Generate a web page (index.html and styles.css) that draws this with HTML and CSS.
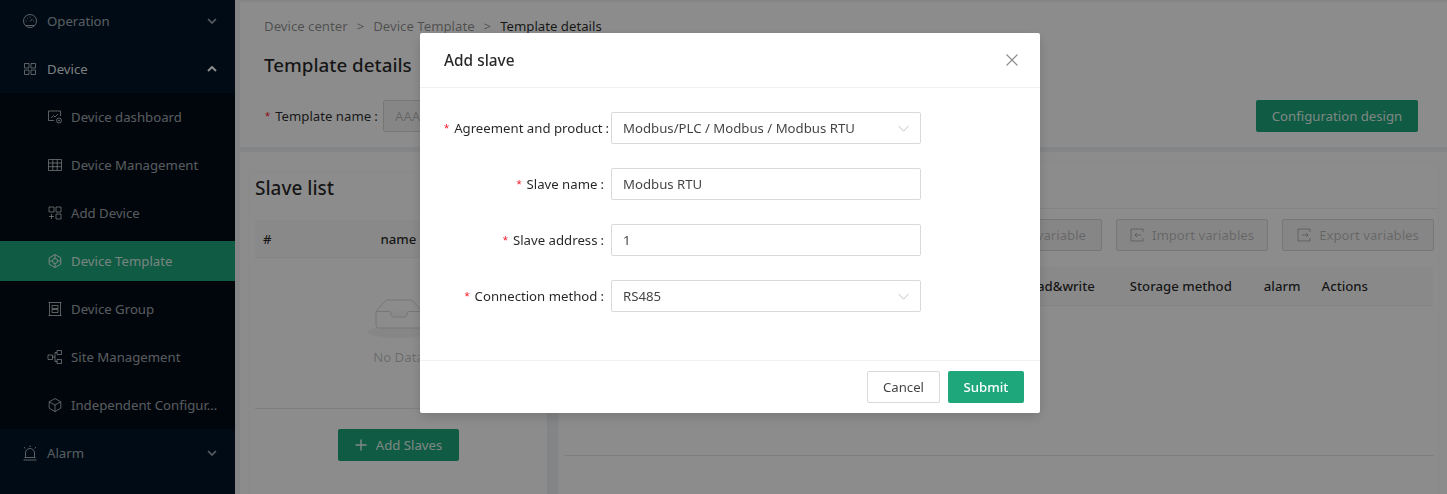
FILE: index.html
```html
<!DOCTYPE html>
<html lang="en">
<head>
<meta charset="utf-8">
<title>Template details</title>
<link rel="stylesheet" href="styles.css">
</head>
<body>
<div class="app">
  <aside class="sider">
    <div class="menu-title">
      <svg class="ico" viewBox="0 0 16 16"><circle cx="8" cy="8" r="6.5"/><path d="M8 8.5l2.6-2.8M3.8 8h1M11.2 8h1M5 5l.7.7M8 3.600v1M4 12.500h8"/></svg>
      <span class="menu-text">Operation</span>
      <svg class="arrow" viewBox="0 0 10 6"><path d="M1 1l4 4 4-4"/></svg>
    </div>
    <div class="menu-title open">
      <svg class="ico" viewBox="0 0 16 16"><path d="M2.500 2.500h4.500v4.500H2.500zM9 2.500h4.500v4.500H9zM2.500 9h4.500v4.500H2.500zM9 9h4.500v4.500H9z"/></svg>
      <span class="menu-text bright">Device</span>
      <svg class="arrow up" viewBox="0 0 10 6"><path d="M1 5l4-4 4 4"/></svg>
    </div>
    <ul class="submenu">
      <li class="sub-item"><svg class="ico" viewBox="0 0 16 16"><path d="M7 11.500H1.500V2h12v5M4 9l2.500-2.500 1.500 1.500 3-3"/><circle cx="12" cy="11.500" r="2.500"/><circle cx="12" cy="11.500" r=".6"/></svg><span>Device dashboard</span></li>
      <li class="sub-item"><svg class="ico" viewBox="0 0 16 16"><path d="M1.500 2.500h13v11h-13zM1.500 6h13M1.500 9.700h13M5.800 2.500v11M10.200 2.500v11"/></svg><span>Device Management</span></li>
      <li class="sub-item"><svg class="ico" viewBox="0 0 16 16"><path d="M2 2h5v5H2zM9 2h5v5H9zM9 9h5v5H9zM4.500 9v5M2 11.500h5"/></svg><span>Add Device</span></li>
      <li class="sub-item selected"><svg class="ico" viewBox="0 0 16 16"><path d="M8 1.500l5.800 3.300v6.400L8 14.500l-5.800-3.300V4.800z"/><circle cx="8" cy="8" r="2.500"/><path d="M2.200 8h3.300M10.500 8h3.300M8 1.500v4M8 10.500v4"/></svg><span>Device Template</span></li>
      <li class="sub-item"><svg class="ico" viewBox="0 0 16 16"><path d="M1.500 1.500h13M1.500 14.500h13M2.500 1.500v13M13.500 1.500v13M5 4.500h6v3H5zM5 8.500h6v3H5z"/></svg><span>Device Group</span></li>
      <li class="sub-item"><svg class="ico" viewBox="0 0 16 16"><path d="M1 6h4.500v4.500H1zM10 1.500h4.500v4H10zM10 10.500h4.500v4H10zM5.500 8h2.500M8 3.500v9M8 3.500h2M8 12.500h2"/></svg><span>Site Management</span></li>
      <li class="sub-item"><svg class="ico" viewBox="0 0 16 16"><path d="M8 1.500l5.800 3.300v6.400L8 14.500l-5.800-3.300V4.800zM2.200 4.800L8 8l5.800-3.200M8 8v6.500"/></svg><span>Independent Configur...</span></li>
    </ul>
    <div class="menu-title">
      <svg class="ico" viewBox="0 0 16 16"><path d="M3.500 12.500V8a4.500 4.500 0 0 1 9 0v4.500M1.500 15h13M2.500 12.500h11M8 .5v1.500M2 2l1.200 1.500M14 2l-1.200 1.500"/></svg>
      <span class="menu-text">Alarm</span>
      <svg class="arrow" viewBox="0 0 10 6"><path d="M1 1l4 4 4-4"/></svg>
    </div>
  </aside>

  <main class="content">
    <section class="top-card">
      <nav class="crumbs">
        <span>Device center</span><span class="sep">&gt;</span><span>Device Template</span><span class="sep">&gt;</span><span class="crumb-now">Template details</span>
      </nav>
      <h1 class="page-title">Template details</h1>
      <div class="template-row">
        <label class="tpl-label"><span class="req">*</span>Template name<span class="colon">:</span></label>
        <div class="tpl-input">AAA</div>
        <button class="btn primary config-btn">Configuration design</button>
      </div>
    </section>

    <section class="work">
      <div class="slave-card">
        <div class="slave-panel">
          <h2 class="panel-title">Slave list</h2>
          <div class="slave-head"><span>#</span><span class="name-col">name</span></div>
          <div class="empty">
            <svg class="empty-ico" width="64" height="41" viewBox="0 0 64 41"><ellipse cx="32" cy="34" rx="32" ry="6" fill="#f5f5f5"/><path d="M55 13.300L44.900 2H19.100L9 13.300V27a3 3 0 0 0 3 3h40a3 3 0 0 0 3-3z" fill="#fff" stroke="#d9d9d9"/><path d="M9 13.500h13c1.500 0 2 1 2 2.500s1 3 3 3h10c2 0 3-1.500 3-3s.5-2.500 2-2.500h13" fill="#fafafa" stroke="#d9d9d9"/></svg>
            <span class="empty-text">No Data</span>
          </div>
          <div class="slave-foot">
            <button class="btn primary add-btn"><svg class="plus" viewBox="0 0 12 12"><path d="M6 .5v11M.5 6h11"/></svg>Add Slaves</button>
          </div>
        </div>
      </div>

      <div class="var-card">
        <div class="var-panel">
          <div class="var-tabs"></div>
          <div class="var-tools">
            <button class="btn ghost add-var">Add variable</button>
            <button class="btn ghost tool"><svg class="tool-ico" viewBox="0 0 14 14"><path d="M13 4V1H1v12h12v-3M11 7H5M7 5L5 7l2 2"/></svg>Import variables</button>
            <button class="btn ghost tool"><svg class="tool-ico" viewBox="0 0 14 14"><path d="M13 4V1H1v12h12v-3M5 7h6M9 5l2 2-2 2"/></svg>Export variables</button>
          </div>
          <div class="var-head">
            <span class="c-rw">read&amp;write</span>
            <span class="c-store">Storage method</span>
            <span class="c-alarm">alarm</span>
            <span class="c-act">Actions</span>
          </div>
          <div class="var-body"></div>
        </div>
      </div>
    </section>
  </main>
</div>

<div class="mask">
  <div class="modal">
    <header class="modal-head">
      <span class="modal-title">Add slave</span>
      <svg class="close" viewBox="0 0 12 12"><path d="M.5.500l11 11M11.500.500l-11 11"/></svg>
    </header>
    <form class="modal-body">
      <div class="field"><label class="field-label wide"><span class="req">*</span>Agreement and product<span class="colon">:</span></label><div class="control">Modbus/PLC / Modbus / Modbus RTU<svg class="chev" viewBox="0 0 12 7"><path d="M.5.500L6 6.500 11.500.500"/></svg></div></div>
      <div class="field"><label class="field-label"><span class="req">*</span>Slave name<span class="colon">:</span></label><div class="control">Modbus RTU</div></div>
      <div class="field"><label class="field-label"><span class="req">*</span>Slave address<span class="colon">:</span></label><div class="control">1</div></div>
      <div class="field"><label class="field-label"><span class="req">*</span>Connection method<span class="colon">:</span></label><div class="control">RS485<svg class="chev" viewBox="0 0 12 7"><path d="M.5.500L6 6.500 11.500.500"/></svg></div></div>
    </form>
    <footer class="modal-foot">
      <button class="btn cancel">Cancel</button>
      <button class="btn submit">Submit</button>
    </footer>
  </div>
</div>
</body>
</html>
```
FILE: styles.css
```css
* { box-sizing: border-box; }
html, body { margin: 0; height: 494px; overflow: hidden; }
body { font-family: "Noto Sans", "Open Sans", sans-serif; font-size: 13.2px; color: rgba(0,0,0,.85); background: #f0f2f5; }
ul { list-style: none; margin: 0; padding: 0; }
h1, h2 { margin: 0; font-weight: 500; }
svg { fill: none; stroke: currentColor; flex: none; }

.app { display: flex; height: 494px; }

/* sidebar */
.sider { width: 235px; flex: none; background: #001529; color: rgba(255,255,255,.65); padding-top: 1px; }
.menu-title { display: flex; align-items: center; height: 40px; padding: 0 18px 0 22px; margin-bottom: 8px; }
.menu-title.open { margin-bottom: 4px; }
.menu-text { margin-left: 9px; flex: 1; padding-bottom: 1px; }
.menu-text.bright { color: rgba(255,255,255,.9); }
.ico { width: 16px; height: 16px; stroke-width: 1; }
.arrow { width: 10px; height: 6px; stroke-width: 1.6; }
.arrow.up { stroke: #fff; stroke-width: 2; }
.submenu { background: #000c17; padding: 4px 0; margin-bottom: 4px; }
.sub-item { display: flex; align-items: center; gap: 8px; height: 40px; padding-left: 47px; margin-bottom: 8px; white-space: nowrap; padding-bottom: 1px; }
.sub-item:last-child { margin-bottom: 0; }
.sub-item.selected { background: #1da77a; color: rgba(255,255,255,.85); }

/* main */
.content { flex: 1; min-width: 0; padding: 2px 0 0 5px; display: flex; flex-direction: column; gap: 5px; }
.top-card { height: 145px; background: #fff; padding: 15px 29px 0 24px; flex: none; }
.crumbs { display: flex; gap: 9px; color: rgba(0,0,0,.45); line-height: 18px; }
.crumb-now { color: rgba(0,0,0,.85); }
.page-title { font-size: 18.8px; line-height: 28px; margin-top: 16px; }
.template-row { display: flex; align-items: center; margin-top: 21px; }
.tpl-label { width: 119px; white-space: nowrap; padding-left: 1px; }
.req { color: #f5222d; font-family: "Liberation Sans", sans-serif; margin-right: 5px; }
.colon { margin-left: 3px; }
.tpl-input { width: 220px; height: 32px; border: 1px solid #d9d9d9; border-radius: 2px; background: #f5f5f5; padding: 0 11px; line-height: 30px; color: rgba(0,0,0,.25); }
.btn { font: inherit; border-radius: 2px; height: 32px; padding: 0 15px; border: 1px solid transparent; display: inline-flex; align-items: center; justify-content: center; white-space: nowrap; background: #fff; }
.btn.primary { background: #1da77a; color: rgba(255,255,255,.9); }
.config-btn { margin-left: auto; width: 162px; }

.work { flex: 1; min-height: 0; display: flex; gap: 11px; }
.slave-card { width: 307px; flex: none; background: #fff; padding: 13px 0 0 10px; }
.slave-panel { height: 100%; padding: 0 5px; box-shadow: 0 0 4px rgba(0,0,0,.04); }
.panel-title { font-size: 19px; line-height: 28px; margin-top: 9px; }
.slave-head { display: flex; height: 38px; align-items: center; background: #fafafa; border-bottom: 1px solid #f0f0f0; padding: 0 8px; margin-top: 18px; font-weight: 500; }
.name-col { margin-left: 109px; }
.empty { height: 151px; border-bottom: 1px solid #e8e8e8; display: flex; flex-direction: column; align-items: center; padding-top: 40px; }
.empty-text { color: rgba(0,0,0,.25); margin-top: 9px; }
.empty-ico { stroke: none; }
.slave-foot { display: flex; justify-content: center; padding-top: 20px; }
.add-btn { width: 121px; gap: 9px; padding: 0; }
.plus { width: 12px; height: 12px; stroke-width: 1.400; }

.var-card { flex: 1; min-width: 0; background: #fff; padding: 10px 9px 0 1px; }
.var-panel { height: 100%; display: flex; flex-direction: column; padding: 0 4px 0 5px; box-shadow: 0 0 4px rgba(0,0,0,.04); }
.var-tabs { height: 47px; border-bottom: 1px solid #f0f0f0; margin: 0 -4px 0 -5px; flex: none; }
.var-tools { display: flex; justify-content: flex-end; gap: 14px; margin-top: 10px; flex: none; }
.btn.ghost { border-color: #d9d9d9; background: #f5f5f5; color: rgba(0,0,0,.25); }
.add-var { width: 152px; justify-content: flex-end; }
.tool { width: 152px; gap: 8px; padding: 0; }
.tool-ico { width: 14px; height: 14px; stroke-width: 1; }
.var-head { height: 39px; margin: 16px 1px 0 0; background: #fafafa; border-bottom: 1px solid #f0f0f0; display: flex; align-items: center; justify-content: flex-end; flex: none; padding-right: 65px; font-weight: 500; }
.c-rw { margin-right: 35px; }
.c-store { margin-right: 32px; }
.c-alarm { margin-right: 21px; }
.var-body { height: 150px; border-bottom: 1px solid #e8e8e8; flex: none; }

/* modal */
.mask { position: fixed; inset: 0; background: rgba(0,0,0,.45); padding: 33px 0 0 420px; }
.modal { width: 620px; height: 380px; background: #fff; border-radius: 2px; box-shadow: 0 4px 12px rgba(0,0,0,.15); display: flex; flex-direction: column; }
.modal-head { height: 55px; flex: none; display: flex; align-items: center; justify-content: space-between; padding: 0 22px 0 24px; border-bottom: 1px solid #f0f0f0; }
.modal-title { font-size: 15.4px; font-weight: 500; color: rgba(0,0,0,.85); }
.close { width: 12px; height: 12px; color: #8c8c8c; stroke-width: 1.100; }
.modal-body { flex: 1; padding: 24px 119px 0 24px; display: flex; flex-direction: column; gap: 24px; }
.field { display: flex; align-items: center; height: 32px; }
.field-label { width: 167px; text-align: right; white-space: nowrap; color: rgba(0,0,0,.85); padding-right: 7px; }
.field-label.wide { padding-right: 2px; }
.control { flex: 1; height: 32px; border: 1px solid #d9d9d9; border-radius: 2px; padding: 0 11px; line-height: 30px; color: rgba(0,0,0,.75); display: flex; align-items: center; justify-content: space-between; }
.chev { width: 11px; height: 7px; color: #bfbfbf; stroke-width: 1; }
.modal-foot { height: 53px; flex: none; border-top: 1px solid #f0f0f0; display: flex; justify-content: flex-end; align-items: center; gap: 8px; padding: 0 16px; }
.btn.cancel { border-color: #d9d9d9; width: 73px; padding: 0; color: rgba(0,0,0,.75); }
.btn.submit { background: #1da77a; color: #fff; width: 76px; padding: 0; font-weight: 500; }
```
